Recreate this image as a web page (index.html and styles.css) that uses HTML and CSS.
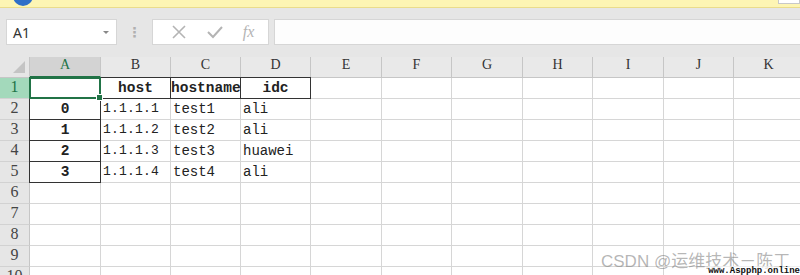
FILE: index.html
```html
<!DOCTYPE html>
<html>
<head lang="zh">
    <meta charset="UTF-8">
    <title>Excel</title>
    <link rel="stylesheet" href="styles.css">
</head>
<body>
<div id="app">
    <div class="notice">
        <span class="notice-icon"></span>
        <span class="notice-box"></span>
    </div>
    <div class="toolbar">
        <div class="namebox">
            <span>A1</span>
            <span class="drop"></span>
        </div>
        <span class="grip">&#8942;</span>
        <div class="fxbox">
            <svg width="16" height="16" viewBox="0 0 16 16"><path d="M2 2 L14 14 M14 2 L2 14" stroke="#b4b4b4" stroke-width="1.6" fill="none"/></svg>
            <svg width="18" height="16" viewBox="0 0 18 16"><path d="M2 8 L7 13 L16 3" stroke="#b4b4b4" stroke-width="2" fill="none"/></svg>
            <span class="fx">fx</span>
        </div>
        <div class="formula"></div>
    </div>
    <div class="sheet">
        <div class="corner"><svg width="14" height="14" viewBox="0 0 14 14"><path d="M13 1 L13 13 L1 13 Z" fill="#c4c4c4"/></svg></div>
        <div class="ch sel">A</div>
        <div class="ch">B</div>
        <div class="ch">C</div>
        <div class="ch">D</div>
        <div class="ch">E</div>
        <div class="ch">F</div>
        <div class="ch">G</div>
        <div class="ch">H</div>
        <div class="ch">I</div>
        <div class="ch">J</div>
        <div class="ch">K</div>

        <div class="rh on">1</div>
        <div class="c active"></div>
        <div class="c b bd">host</div>
        <div class="c b bd">hostname</div>
        <div class="c b bd">idc</div>
        <div class="c"></div><div class="c"></div><div class="c"></div><div class="c"></div><div class="c"></div><div class="c"></div><div class="c"></div>

        <div class="rh">2</div>
        <div class="c b bd">0</div>
        <div class="c dots">1.1.1.1</div>
        <div class="c">test1</div>
        <div class="c">ali</div>
        <div class="c"></div><div class="c"></div><div class="c"></div><div class="c"></div><div class="c"></div><div class="c"></div><div class="c"></div>

        <div class="rh">3</div>
        <div class="c b bd">1</div>
        <div class="c dots">1.1.1.2</div>
        <div class="c">test2</div>
        <div class="c">ali</div>
        <div class="c"></div><div class="c"></div><div class="c"></div><div class="c"></div><div class="c"></div><div class="c"></div><div class="c"></div>

        <div class="rh">4</div>
        <div class="c b bd">2</div>
        <div class="c dots">1.1.1.3</div>
        <div class="c">test3</div>
        <div class="c">huawei</div>
        <div class="c"></div><div class="c"></div><div class="c"></div><div class="c"></div><div class="c"></div><div class="c"></div><div class="c"></div>

        <div class="rh">5</div>
        <div class="c b bd">3</div>
        <div class="c dots">1.1.1.4</div>
        <div class="c">test4</div>
        <div class="c">ali</div>
        <div class="c"></div><div class="c"></div><div class="c"></div><div class="c"></div><div class="c"></div><div class="c"></div><div class="c"></div>

        <div class="rh">6</div>
        <div class="c"></div><div class="c"></div><div class="c"></div><div class="c"></div><div class="c"></div><div class="c"></div><div class="c"></div><div class="c"></div><div class="c"></div><div class="c"></div><div class="c"></div>
        <div class="rh">7</div>
        <div class="c"></div><div class="c"></div><div class="c"></div><div class="c"></div><div class="c"></div><div class="c"></div><div class="c"></div><div class="c"></div><div class="c"></div><div class="c"></div><div class="c"></div>
        <div class="rh">8</div>
        <div class="c"></div><div class="c"></div><div class="c"></div><div class="c"></div><div class="c"></div><div class="c"></div><div class="c"></div><div class="c"></div><div class="c"></div><div class="c"></div><div class="c"></div>
        <div class="rh">9</div>
        <div class="c"></div><div class="c"></div><div class="c"></div><div class="c"></div><div class="c"></div><div class="c"></div><div class="c"></div><div class="c"></div><div class="c"></div><div class="c"></div><div class="c"></div>
        <div class="rh">10</div>
        <div class="c"></div><div class="c"></div><div class="c"></div><div class="c"></div><div class="c"></div><div class="c"></div><div class="c"></div><div class="c"></div><div class="c"></div><div class="c"></div><div class="c"></div>
    </div>
    <div class="mark">CSDN @运维技术－陈工</div>
    <div class="site">www.Aspphp.online</div>
</div>
</body>
</html>
```

FILE: styles.css
```css
*{
    margin: 0;
    padding: 0;
    box-sizing: border-box;
}
body{
    width: 800px;
    height: 275px;
    overflow: hidden;
    background: #fff;
}
#app{
    position: relative;
    width: 800px;
    height: 275px;
    overflow: hidden;
}
.notice{
    height: 8px;
    background: #fdf5b4;
    border-bottom: 1px solid #eadc8c;
    display: flex;
    overflow: hidden;
}
.notice-icon{
    width: 20px;
    height: 20px;
    border-radius: 50%;
    background: #2f6fc8;
    margin: -14px 0 0 13px;
}
.notice-box{
    width: 22px;
    height: 4px;
    margin: 0 0 0 auto;
    background: #fff;
    border: 1px solid #c8c8c8;
    border-top: 0;
}
.toolbar{
    height: 49px;
    background: #e6e6e6;
    display: flex;
    align-items: center;
    padding: 0 0 1px 6px;
}
.namebox{
    width: 111px;
    height: 26px;
    background: #fff;
    border: 1px solid #d6d6d6;
    display: flex;
    align-items: center;
    justify-content: space-between;
    padding: 0 7px 0 6px;
    font: 14px "Noto Sans", "Liberation Sans", sans-serif;
    color: #333;
}
.drop{
    width: 0;
    height: 0;
    border-left: 3px solid transparent;
    border-right: 3px solid transparent;
    border-top: 3px solid #888;
}
.grip{
    width: 35px;
    text-align: center;
    color: #b0b0b0;
    font: bold 14px "DejaVu Sans", sans-serif;
}
.fxbox{
    width: 117px;
    height: 26px;
    background: #fff;
    border: 1px solid #d6d6d6;
    display: flex;
    align-items: center;
    justify-content: space-around;
    padding: 0 4px 0 8px;
}
.fx{
    font: italic 16px "Liberation Serif", serif;
    color: #b4b4b4;
}
.formula{
    flex: 1;
    height: 26px;
    margin-left: 5px;
    background: #fdfdfd;
    border: 1px solid #d6d6d6;
    border-right: 0;
}
.sheet{
    display: grid;
    grid-template-columns: 30px 71px 70px 70px 70px 71px 70px 71px 70px 71px 70px 70px;
    grid-auto-rows: 21px;
    font: 14px "Liberation Mono", monospace;
    color: #222;
}
.corner{
    background: #e6e6e6;
    border-right: 1px solid #c6c6c6;
    border-bottom: 1px solid #c6c6c6;
    display: flex;
    align-items: flex-end;
    justify-content: flex-end;
    padding: 0 3px 3px 0;
}
.ch{
    background: #e9e9e9;
    border-right: 1px solid #c6c6c6;
    border-bottom: 1px solid #c6c6c6;
    text-align: center;
    line-height: 20px;
    font: 14px "Liberation Serif", serif;
    color: #333;
}
.ch.sel{
    background: #d3d3d3;
    border-bottom: 2px solid #217346;
    color: #217346;
}
.rh{
    background: #e6e6e6;
    border-right: 1px solid #c6c6c6;
    border-bottom: 1px solid #d2d2d2;
    text-align: center;
    line-height: 21px;
    font: 16px "Liberation Serif", serif;
    color: #444;
}
.rh.on{
    background: #a3d9bb;
    color: #217346;
}
.c{
    border-right: 1px solid #d6d6d6;
    border-bottom: 1px solid #d6d6d6;
    line-height: 20px;
    padding-left: 2px;
    white-space: nowrap;
}
.c.b{
    font-weight: bold;
    text-align: center;
    padding-left: 0;
    font-size: 14.5px;
}
.c.bd{
    border-right-color: #333;
    border-bottom-color: #333;
    box-shadow: -1px 0 0 #333, 0 -1px 0 #333, -1px -1px 0 #333;
}
.c.dots{
    font-size: 13px;
    letter-spacing: 0.2px;
}
.c.active{
    position: relative;
    z-index: 1;
    border: 2px solid #217346;
    margin: -1px 0 0 -1px;
    width: 72px;
    height: 22px;
}
.c.active::after{
    content: "";
    position: absolute;
    right: -4px;
    bottom: -4px;
    width: 5px;
    height: 5px;
    background: #217346;
    border: 1px solid #fff;
}
.mark{
    position: absolute;
    left: 601px;
    top: 247px;
    white-space: nowrap;
    font: 17px "Liberation Sans", "Noto Sans CJK SC", sans-serif;
    color: rgba(120, 120, 120, 0.55);
}
.site{
    position: absolute;
    right: 0;
    bottom: -1px;
    white-space: nowrap;
    font: bold 9px "Liberation Mono", "DejaVu Sans Mono", monospace;
    line-height: 10px;
    color: #111;
    background: rgba(255, 255, 255, 0.6);
}
```
